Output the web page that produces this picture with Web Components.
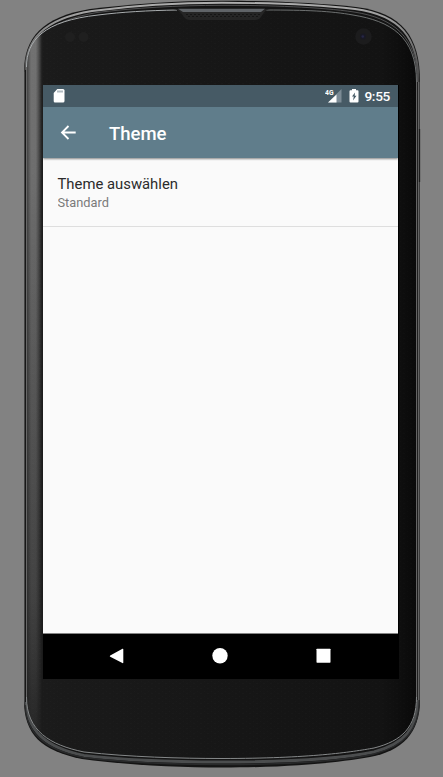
<!DOCTYPE html>
<html lang="de"><head><meta charset="utf-8"><title>Theme</title>
<style>html,body{margin:0;width:443px;height:777px;overflow:hidden;background:#828282}</style></head>
<body>
<phone-frame>
  <status-bar time="9:55"></status-bar>
  <app-bar>Theme</app-bar>
  <settings-list><settings-row>Theme auswählen<span slot="summary">Standard</span></settings-row></settings-list>
  <nav-bar></nav-bar>
</phone-frame>
<script>
function define(name, html){
  const t=document.createElement('template');t.innerHTML=html;
  customElements.define(name,class extends HTMLElement{
    constructor(){super();this.attachShadow({mode:'open'}).append(t.content.cloneNode(true));}
    connectedCallback(){const c=this.shadowRoot.querySelector('[data-time]');if(c)c.textContent=this.getAttribute('time');}
  });
}
define('phone-frame',`
<style>
:host{display:block;position:relative;box-sizing:border-box;width:443px;height:777px;padding:85px 44px 98px 43px;font-family:Roboto,sans-serif}
svg{position:absolute;inset:0}
.screen{position:relative;display:flex;flex-direction:column;width:355px;height:594px;box-shadow:1px 0 #000}
</style>
<svg width="443" height="777" viewBox="0 0 443 777" fill="none">
<defs>
<linearGradient id="face" gradientUnits="userSpaceOnUse" x1="25" y1="0" x2="420" y2="0">
<stop offset="0" stop-color="#1c1c1c"/><stop offset=".1" stop-color="#1a1a1a"/><stop offset=".9" stop-color="#131313"/><stop offset=".96" stop-color="#0d0d0d"/><stop offset="1" stop-color="#080808"/></linearGradient>
<linearGradient id="sideX" gradientUnits="userSpaceOnUse" x1="27" y1="0" x2="43" y2="0"><stop offset="0" stop-color="#fff" stop-opacity=".18"/><stop offset=".25" stop-color="#fff" stop-opacity=".38"/><stop offset=".55" stop-color="#fff" stop-opacity=".38"/><stop offset=".72" stop-color="#fff" stop-opacity=".24"/><stop offset=".9" stop-color="#fff" stop-opacity=".05"/><stop offset="1" stop-color="#fff" stop-opacity="0"/></linearGradient>
<linearGradient id="fade" gradientUnits="userSpaceOnUse" x1="0" y1="30" x2="0" y2="745"><stop offset="0" stop-color="#fff"/><stop offset=".2" stop-color="#f4f4f4"/><stop offset=".45" stop-color="#b8b8b8"/><stop offset=".8" stop-color="#707070"/><stop offset="1" stop-color="#181818"/></linearGradient>
<mask id="fadeMask"><path fill="url(#fade)" d="M20 20h30v730H20z"/></mask>
<linearGradient id="rim" gradientUnits="userSpaceOnUse" x1="0" y1="1" x2="0" y2="80"><stop offset="0" stop-color="#b0b0b0"/><stop offset=".3" stop-color="#949494"/><stop offset=".7" stop-color="#606060"/><stop offset="1" stop-color="#444"/></linearGradient>
<pattern id="grain" width="7" height="5" patternUnits="userSpaceOnUse"><path d="M1 1.500h1M4 3.500h2" stroke="#fff" stroke-opacity=".012"/></pattern>
<pattern id="mesh" width="4" height="4" patternUnits="userSpaceOnUse"><path fill="#151515" d="M0 0h2v1H0zM2 2h2v1H2z"/></pattern>
<path id="outside" d="M24 72C24 38 42 17 90 9C130 4 178 .7 222 .7C266 .7 320 3 356 7C402 13 420 36 420 82V700C420 733 402 751 370 757C336 763 290 767.500 222 767.500C180 767.500 125 765 82 759C42 751 24 735 24 700Z"/>
<path id="inside" d="M26.500 67C26.500 40 44 21 98 15C130 11.500 172 9.500 220 9.500C275 9.500 331 11 353 15C390 21 416.500 36 416.500 82V697C416.500 727 402 741 374 748C352 752 310 758.500 222 758.500C180 758.500 130 757 84 752C50 745 26.500 731 26.500 697Z"/>
<clipPath id="clip"><use href="#inside"/></clipPath>
<clipPath id="body"><use href="#outside"/></clipPath>
</defs>
<use href="#outside" fill="#141414"/>
<g clip-path="url(#body)">
<path stroke="#4b4d4e" stroke-width="3" d="M25.500 697C26 731 46 748 84 755.500C130 761 180 762 222 762C310 762 352 756.500 374 752C404 744 418 729 418.500 697"/>
<path stroke="#292a2b" stroke-width="1.500" d="M25 705C26 734 46 750 84 757.500C130 763 180 764.500 222 764.500C310 764.500 352 759 374 754C404 746 419 731 419.500 700"/>
</g>
<path stroke="url(#rim)" stroke-width="1.900" d="M25.300 72C25.300 40 43 19 92 11C130 6 178 2.800 222 2.800C266 2.800 320 5 355 9C400 15 418.500 37 418.500 82"/>
<path stroke="#5f6061" stroke-width=".8" d="M26.500 64C29 40 48 21 97 12.500C134 8 178 5.300 222 5.300C270 5.300 320 7 354 12C393 18 417.500 36 417.500 82"/>
<use href="#inside" fill="url(#face)"/><use href="#inside" fill="url(#grain)"/>
<g clip-path="url(#clip)"><path fill="url(#sideX)" mask="url(#fadeMask)" d="M27 30h16v715H27z"/></g>
<path stroke="#a9adaf" d="M26.500 67C26.500 40 44 21 98 15C122 12 148 10.500 177 10"/>
<path stroke="#777a7b" stroke-width=".9" d="M266 10C306 10 331 11 353 15C390 21 416.500 36 416.500 82"/>
<path stroke="#858889" d="M416.500 697C416.500 727 402 741 374 748C352 752 310 758.500 222 758.500C180 758.500 130 757 84 752C50 745 26.500 731 26.500 697"/>
<path stroke="#444" d="M24.500 72V700"/><path stroke="#686868" d="M26.500 67V697"/><path stroke="#171717" d="M25.500 70V702"/>
<path stroke="#636363" d="M416.500 82V697M418.500 82V700"/><path stroke="#202020" d="M417.500 82V700"/><path stroke="#3b3b3b" d="M419.500 82V700"/>
<path stroke="#1b1b1b" stroke-width="1.300" d="M419.500 129V182"/>
<path fill="#252525" d="M173 9H270Q266 9.500 263 14L261 17Q259 20 255 20H190Q186 20 184 17L181 13Q178 9.500 173 9Z"/>
<path fill="#606468" d="M178 8.800H265L261 12H183Z"/>
<path fill="url(#mesh)" d="M184 13H261L258 18H187Z"/>
<circle cx="70" cy="37" r="5" fill="#1f1f1f"/><circle cx="83.500" cy="37" r="5" fill="#1f1f1f"/>
<circle cx="363.500" cy="36.500" r="8.300" fill="#1c1c1d"/><circle cx="363" cy="36.500" r="3" fill="#191924"/><circle cx="362.800" cy="36.500" r="1.300" fill="#262646"/>
</svg><div class="screen"><slot></slot></div>`);
define('status-bar',`
<style>:host{display:flex;align-items:center;box-sizing:border-box;height:22px;padding:0 8px 0 10px;background:#465a65;color:#fff;font:500 13.700px/22px Roboto,sans-serif}
svg{display:block}.signal{margin-left:auto}.battery{margin:0 6px 0 7px}span{width:25px;text-align:right;white-space:nowrap;display:flex;justify-content:flex-end;letter-spacing:-.35px}.net{font:700 7px Roboto,sans-serif}</style>
<svg width="12" height="14" viewBox="0 0 12 14"><path fill="#fff" d="M4.300 0H10Q11.500 0 11.500 1.500V12Q11.500 13.500 10 13.500H2Q.7 13.500.7 12V4Z"/><path fill="#667985" d="M4.500 1.500h1v2h-1zM6.500 1.500h1v2h-1zM8.500 1.500h1v2h-1z"/></svg>
<svg class="signal" width="17" height="14" viewBox="0 0 17 14"><path fill="#7c8b95" d="M16.500 0V13.500H3Z"/><path fill="#fff" d="M11.500 5.500V13.500H3Z"/><path fill="#465a65" d="M0 0H9V7H0Z"/><text class="net" x="0" y="6" textLength="8.500" lengthAdjust="spacingAndGlyphs" fill="#fff">4G</text></svg>
<svg class="battery" width="10" height="14" viewBox="0 0 10 14"><path fill="#fff" d="M3 0H7V1.300H8.500Q9.500 1.300 9.500 2.300V12.500Q9.500 13.500 8.500 13.500H1.500Q.5 13.500.5 12.500V2.300Q.5 1.300 1.500 1.300H3Z"/><path fill="#465a65" d="M6 3.500 3 7.500H4.800L4 11.500 7.500 6.700H5.700Z"/></svg>
<span data-time></span>`);
define('app-bar',`
<style>:host{display:flex;align-items:center;box-sizing:border-box;height:51px;padding-left:17px;gap:32px;background:#607d8b;color:#fff;font:500 18.500px/51px Roboto,sans-serif;box-shadow:0 1px 2px #0007;z-index:1;clip-path:inset(0 0 -5px)}h1{font:inherit;margin:0;padding-top:3px}svg{display:block}</style>
<svg width="17" height="17" viewBox="0 0 17 17"><path d="M15.700 8.500H2M8.500 2 2 8.500 8.500 15" fill="none" stroke="#fff" stroke-width="1.800"/></svg><h1><slot></slot></h1>`);
define('settings-list',`<style>:host{display:block;flex:1;background:#fafafa;border-bottom:1px solid #858585;box-sizing:border-box}</style><slot></slot>`);
define('settings-row',`
<style>:host{display:flex;flex-direction:column;box-sizing:border-box;height:69px;padding:16px 14px 0 14.500px;border-bottom:1px solid #dedede;color:#2b2b2b;font:14.850px/20px Roboto,sans-serif}.sub{color:#7a7a7a;font-size:12.800px;line-height:17px;height:13.500px;overflow:hidden}</style>
<div><slot></slot></div><div class="sub"><slot name="summary"></slot></div>`);
define('nav-bar',`
<style>:host{display:flex;align-items:center;justify-content:space-between;box-sizing:border-box;height:45px;padding:0 67px 2px 66px;background:#000}svg{display:block;overflow:visible}</style>
<svg width="16" height="16" viewBox="0 0 16 16"><path fill="#fff" d="M13.500 0.700Q14.300.4 14.300 1.300V14.500Q14.300 15.500 13.400 15L1.200 8.700Q.3 8 1.200 7.400Z"/></svg>
<svg width="16" height="16" viewBox="0 0 16 16"><circle cx="8" cy="7.700" r="7.700" fill="#fff"/></svg>
<svg width="16" height="16" viewBox="0 0 16 16"><rect x="1.500" y=".7" width="14" height="14" rx=".6" fill="#fff"/></svg>`);
</script></body></html>
